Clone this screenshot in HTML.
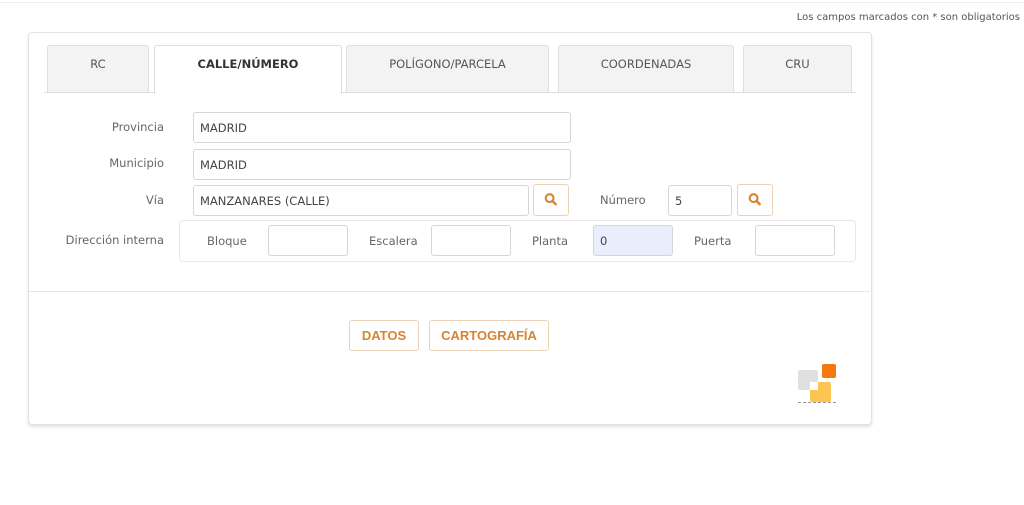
<!DOCTYPE html>
<html><head><meta charset="utf-8"><style>
body{margin:0;width:1024px;height:505px;background:#fff;font-family:"DejaVu Sans","Liberation Sans",sans-serif;font-size:11.5px;color:#666;position:relative;overflow:hidden}
.a{position:absolute}
.top{left:0;top:0;width:1024px;height:2px;border-bottom:1px solid #eee}
.card{left:28px;top:32px;width:842px;height:391px;border:1px solid #e2e2e2;border-radius:4px;box-shadow:0 2px 3px rgba(0,0,0,.12);background:#fff}
.tab{top:45px;height:47px;background:#f3f3f3;border:1px solid #dedede;border-bottom:none;border-radius:3px 3px 0 0;text-align:center;line-height:37px;color:#555;font-size:11.5px;box-sizing:border-box}
.tab.on{background:#fff;height:49px;font-weight:bold;color:#333;z-index:2}
.lbl{text-align:right;width:140px;left:24px;color:#666}
.in{height:31px;border:1px solid #d6d6d6;border-radius:3px;box-sizing:border-box;padding-left:6px;line-height:30px;color:#444;background:#fff}
.btn{border:1px solid #ecd3b8;border-radius:3px;box-sizing:border-box;background:#fff}
.ob{color:#d9832f;font-weight:bold;font-size:13px;text-align:center;line-height:29px;font-family:"Liberation Sans",sans-serif}
</style></head><body>
<div class="a top"></div>
<div class="a" style="right:4px;top:12px;font-size:10px;color:#555">Los campos marcados con * son obligatorios</div>
<div class="a card"></div>
<div class="a" style="left:44px;top:92px;width:812px;height:1px;background:#dedede"></div>
<div class="a tab" style="left:47px;width:102px">RC</div>
<div class="a tab on" style="left:154px;width:188px">CALLE/NÚMERO</div>
<div class="a tab" style="left:346px;width:203px">POLÍGONO/PARCELA</div>
<div class="a tab" style="left:558px;width:176px">COORDENADAS</div>
<div class="a tab" style="left:743px;width:109px">CRU</div>

<div class="a lbl" style="top:120px">Provincia</div>
<div class="a in" style="left:193px;top:112px;width:378px">MADRID</div>
<div class="a lbl" style="top:156px">Municipio</div>
<div class="a in" style="left:193px;top:149px;width:378px">MADRID</div>
<div class="a lbl" style="top:193px">Vía</div>
<div class="a in" style="left:193px;top:185px;width:336px">MANZANARES (CALLE)</div>
<svg class="a btn" style="left:533px;top:184px;width:36px;height:32px" viewBox="0 0 36 32"><circle cx="16.5" cy="14" r="4.2" fill="none" stroke="#d9832f" stroke-width="2.2"/><line x1="19.5" y1="17" x2="23" y2="20.5" stroke="#d9832f" stroke-width="2.6" stroke-linecap="round"/></svg>
<div class="a" style="left:600px;top:193px">Número</div>
<div class="a in" style="left:668px;top:185px;width:64px">5</div>
<svg class="a btn" style="left:737px;top:184px;width:36px;height:32px" viewBox="0 0 36 32"><circle cx="16.5" cy="14" r="4.2" fill="none" stroke="#d9832f" stroke-width="2.2"/><line x1="19.5" y1="17" x2="23" y2="20.5" stroke="#d9832f" stroke-width="2.6" stroke-linecap="round"/></svg>

<div class="a lbl" style="top:233px">Dirección interna</div>
<div class="a" style="left:179px;top:220px;width:677px;height:42px;border:1px solid #e8e8e8;border-radius:4px;box-sizing:border-box"></div>
<div class="a" style="left:207px;top:234px">Bloque</div>
<div class="a in" style="left:268px;top:225px;width:80px"></div>
<div class="a" style="left:369px;top:234px">Escalera</div>
<div class="a in" style="left:431px;top:225px;width:80px"></div>
<div class="a" style="left:532px;top:234px">Planta</div>
<div class="a in" style="left:593px;top:225px;width:80px;background:#e8eefc">0</div>
<div class="a" style="left:694px;top:234px">Puerta</div>
<div class="a in" style="left:755px;top:225px;width:80px"></div>

<div class="a" style="left:29px;top:291px;width:841px;height:1px;background:#e6e6e6"></div>
<div class="a btn ob" style="left:349px;top:320px;width:70px;height:31px">DATOS</div>
<div class="a btn ob" style="left:429px;top:320px;width:120px;height:31px">CARTOGRAFÍA</div>

<div class="a" style="left:798px;top:370px;width:20px;height:20px;background:#e0e0e0;border-radius:2px"></div>
<div class="a" style="left:810px;top:382px;width:21px;height:20px;background:#fcc451;border-radius:2px"></div>
<div class="a" style="left:810px;top:382px;width:8px;height:8px;background:#fff"></div>
<div class="a" style="left:822px;top:364px;width:14px;height:14px;background:#f47a10;border-radius:2px"></div>
<div class="a" style="left:798px;top:402px;width:38px;height:1px;border-top:1px dashed #999"></div>
</body></html>
